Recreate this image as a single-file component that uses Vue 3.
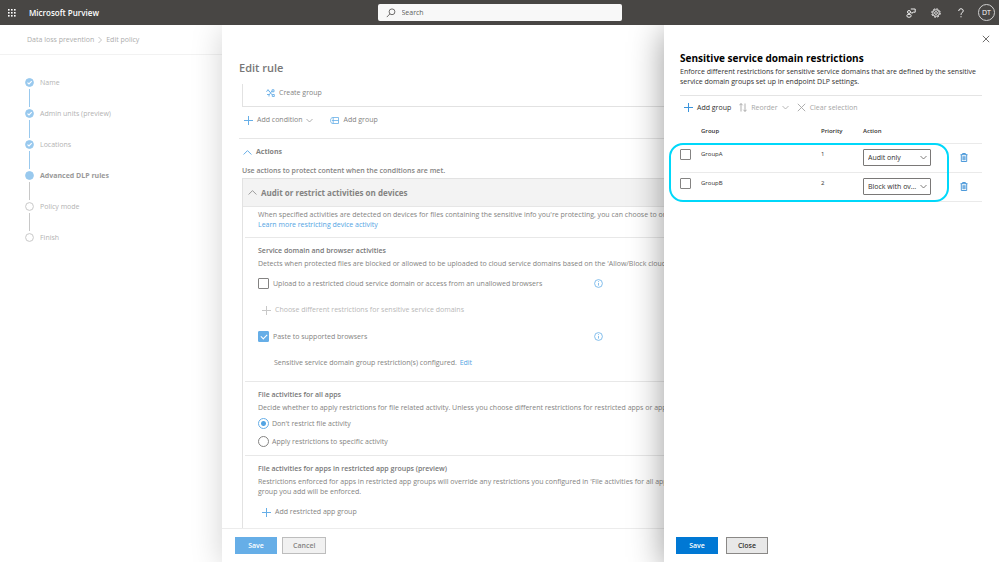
<script setup>
import { ref } from 'vue'

const steps = [
  { label: 'Name', state: 'done' },
  { label: 'Admin units (preview)', state: 'done' },
  { label: 'Locations', state: 'done' },
  { label: 'Advanced DLP rules', state: 'current' },
  { label: 'Policy mode', state: 'todo' },
  { label: 'Finish', state: 'todo' }
]

const actions = ['Audit only', 'Block with override', 'Block']

const groups = ref([
  { name: 'GroupA', priority: 1, action: 'Audit only', selected: false },
  { name: 'GroupB', priority: 2, action: 'Block with override', selected: false }
])

const search = ref('')
const upload = ref(false)
const paste = ref(true)
const fileActivity = ref('none')
</script>

<template>
  <div class="page">
    <header class="topbar">
      <div class="brand">
        <button class="icon-btn" aria-label="App launcher">
          <svg width="10" height="10" viewBox="0 0 10 10" fill="#fff">
            <template v-for="y in 3" :key="y">
              <rect v-for="x in 3" :key="x" :x="x * 3 - 2" :y="y * 3 - 2" width="1.6" height="1.6" />
            </template>
          </svg>
        </button>
        <span class="product">Microsoft Purview</span>
      </div>
      <label class="search">
        <svg width="10" height="10" viewBox="0 0 10 10" fill="none" stroke="#605e5c" stroke-width="0.9">
          <circle cx="6" cy="3.8" r="2.9" />
          <path d="M3.9 5.9L.8 9.1" />
        </svg>
        <input v-model="search" type="text" placeholder="Search" aria-label="Search" />
      </label>
      <div class="tools">
        <button class="icon-btn" aria-label="Feedback">
          <svg width="10" height="10" viewBox="0 0 10 10" fill="none" stroke="#fff" stroke-width="0.9">
            <circle cx="3" cy="4" r="1.5" />
            <ellipse cx="3" cy="7.8" rx="2.2" ry="1.5" />
            <path d="M4.8 1h4.4v3.2H7.2L5.8 5.4V4.2" />
          </svg>
        </button>
        <button class="icon-btn" aria-label="Settings">
          <svg width="10" height="10" viewBox="0 0 10 10" fill="none" stroke="#fff">
            <circle cx="5" cy="5" r="4.2" stroke-width="1" stroke-dasharray="1.9 1.4" />
            <circle cx="5" cy="5" r="3.3" stroke-width="0.8" />
            <circle cx="5" cy="5" r="1.4" stroke-width="0.8" />
          </svg>
        </button>
        <button class="icon-btn" aria-label="Help">
          <svg width="10" height="10" viewBox="0 0 10 10" fill="none" stroke="#fff" stroke-width="1">
            <path d="M2.8 3C2.8 1.5 3.7.8 5 .8s2.2.8 2.2 2c0 1.7-2.2 1.9-2.2 4" />
            <path d="M5 8.2v1.1" />
          </svg>
        </button>
        <button class="avatar">DT</button>
      </div>
    </header>

    <main class="policy">
      <nav class="crumbs" aria-label="Breadcrumb">
        <a href="#">Data loss prevention</a>
        <svg width="4" height="8" viewBox="0 0 4 8" fill="none" stroke="#b5b5b5" stroke-width="0.8">
          <path d="M.5 1l3 3-3 3" />
        </svg>
        <a href="#">Edit policy</a>
      </nav>
      <ol class="steps">
        <li v-for="step in steps" :key="step.label" :class="step.state">
          <span class="rail">
            <svg width="9" height="9" viewBox="0 0 9 9" fill="none">
              <circle class="dot" cx="4.5" cy="4.5" r="3.9" />
              <path v-if="step.state === 'done'" d="M2.5 4.6L4 6l2.7-2.8" stroke="#fff" stroke-width="1.1" />
            </svg>
            <span class="line"></span>
          </span>
          <span class="label">{{ step.label }}</span>
        </li>
      </ol>
    </main>

    <section class="rule" aria-label="Edit rule">
      <h1>Edit rule</h1>
      <div class="rule-body">
        <div class="conditions">
          <button class="cmd">
            <svg width="9" height="8" viewBox="0 0 9 8" fill="none" stroke="#66aee7" stroke-width="0.9">
              <path d="M.5 2.8L2 .6l1.500 2.200M3 1.800l3 4M6 2L3 6M6 .8h2v2H6zM1 5.500h2v2M6.300 5.500h2v2h-2z" />
            </svg>
            Create group
          </button>
        </div>
        <div class="cmd-row">
          <button class="cmd">
            <svg width="9" height="9" viewBox="0 0 9 9" stroke="#66aee7"><path d="M4.5 0v9M0 4.5h9" /></svg>
            Add condition
            <svg width="7" height="5" viewBox="0 0 7 5" fill="none" stroke="#999" stroke-width="0.8"><path d="M.5 1l3 3 3-3" /></svg>
          </button>
          <button class="cmd">
            <svg width="9" height="7" viewBox="0 0 9 7" fill="none" stroke="#66aee7" stroke-width="0.8">
              <path d="M3 .5h5.500v6H3C1.200 6.500.5 5 .5 3.500S1.200.5 3 .5zM3.200.5v6M1.800 3.500h6.700" />
            </svg>
            Add group
          </button>
        </div>

        <h2>
          <svg width="9" height="5" viewBox="0 0 9 5" fill="none" stroke="#66aee7"><path d="M.6 4.500l3.900-3.900 3.900 3.900" /></svg>
          Actions
        </h2>
        <p class="hint">Use actions to protect content when the conditions are met.</p>

        <div class="card">
          <h3 class="card-head">
            <svg width="9" height="5" viewBox="0 0 9 5" fill="none" stroke="#848484" stroke-width="0.8"><path d="M.6 4.500l3.900-3.900 3.900 3.900" /></svg>
            Audit or restrict activities on devices
          </h3>
          <div class="block intro">
            <p>When specified activities are detected on devices for files containing the sensitive info you're protecting, you can choose to only</p>
            <a href="#">Learn more restricting device activity</a>
          </div>
          <div class="block">
            <h4>Service domain and browser activities</h4>
            <p>Detects when protected files are blocked or allowed to be uploaded to cloud service domains based on the 'Allow/Block cloud</p>
            <div class="option">
              <label><input v-model="upload" type="checkbox" /> Upload to a restricted cloud service domain or access from an unallowed browsers</label>
              <svg class="info" width="9" height="9" viewBox="0 0 9 9" fill="none" stroke="#66aee7" stroke-width="0.8">
                <circle cx="4.5" cy="4.5" r="3.9" /><path d="M4.5 4v2.600M4.5 2.200v.9" />
              </svg>
            </div>
            <button class="cmd nested" disabled>
              <svg width="9" height="9" viewBox="0 0 9 9" stroke="#c8c8c8"><path d="M4.5 0v9M0 4.5h9" /></svg>
              Choose different restrictions for sensitive service domains
            </button>
            <div class="option">
              <label><input v-model="paste" type="checkbox" /> Paste to supported browsers</label>
              <svg class="info" width="9" height="9" viewBox="0 0 9 9" fill="none" stroke="#66aee7" stroke-width="0.8">
                <circle cx="4.5" cy="4.5" r="3.9" /><path d="M4.5 4v2.600M4.5 2.200v.9" />
              </svg>
            </div>
            <p class="configured">Sensitive service domain group restriction(s) configured. <a href="#">Edit</a></p>
          </div>
          <div class="block">
            <h4>File activities for all apps</h4>
            <p>Decide whether to apply restrictions for file related activity. Unless you choose different restrictions for restricted apps or app groups</p>
            <div class="radios">
              <label><input v-model="fileActivity" type="radio" name="activity" value="none" /> Don't restrict file activity</label>
              <label><input v-model="fileActivity" type="radio" name="activity" value="specific" /> Apply restrictions to specific activity</label>
            </div>
          </div>
          <div class="block">
            <h4>File activities for apps in restricted app groups (preview)</h4>
            <p>Restrictions enforced for apps in restricted app groups will override any restrictions you configured in 'File activities for all apps'<br />group you add will be enforced.</p>
            <button class="cmd nested add-app">
              <svg width="9" height="9" viewBox="0 0 9 9" stroke="#66aee7"><path d="M4.5 0v9M0 4.5h9" /></svg>
              Add restricted app group
            </button>
          </div>
        </div>
      </div>
      <footer class="rule-foot">
        <button class="btn primary">Save</button>
        <button class="btn">Cancel</button>
      </footer>
    </section>

    <aside class="domains" aria-label="Sensitive service domain restrictions">
      <button class="icon-btn close" aria-label="Close panel">
        <svg width="8" height="8" viewBox="0 0 8 8" stroke="#605e5c" stroke-width="0.9"><path d="M.8.8l6.400 6.400M7.200.8L.8 7.200" /></svg>
      </button>
      <h1>Sensitive service domain restrictions</h1>
      <p class="lead">Enforce different restrictions for sensitive service domains that are defined by the sensitive service domain groups set up in endpoint DLP settings.</p>
      <div class="toolbar">
        <button class="cmd">
          <svg width="9" height="9" viewBox="0 0 9 9" stroke="#3a94dc"><path d="M4.5 0v9M0 4.5h9" /></svg>
          Add group
        </button>
        <button class="cmd" disabled>
          <svg width="8" height="9" viewBox="0 0 8 9" fill="none" stroke="#a6a6a6" stroke-width="0.9"><path d="M2 8.500v-8M.3 2.300L2 .6l1.700 1.700M6 .5v8M4.300 6.700L6 8.400l1.700-1.700" /></svg>
          Reorder
          <svg width="7" height="5" viewBox="0 0 7 5" fill="none" stroke="#a6a6a6" stroke-width="0.8"><path d="M.5 1l3 3 3-3" /></svg>
        </button>
        <button class="cmd" disabled>
          <svg width="9" height="9" viewBox="0 0 9 9" stroke="#a6a6a6" stroke-width="0.9"><path d="M.8.8l7.400 7.400M8.200.8L.8 8.200" /></svg>
          Clear selection
        </button>
      </div>
      <div class="table-wrap">
        <table>
          <colgroup>
            <col class="c-check" /><col /><col class="c-priority" /><col class="c-action" /><col class="c-delete" />
          </colgroup>
          <thead>
            <tr>
              <th></th>
              <th>Group</th>
              <th>Priority</th>
              <th>Action</th>
              <th></th>
            </tr>
          </thead>
          <tbody>
            <tr v-for="group in groups" :key="group.name">
              <td><input v-model="group.selected" type="checkbox" :aria-label="'Select ' + group.name" /></td>
              <td>{{ group.name }}</td>
              <td>{{ group.priority }}</td>
              <td class="mid">
                <span class="dropdown">
                  <select v-model="group.action" :aria-label="'Action for ' + group.name">
                    <option v-for="action in actions" :key="action">{{ action }}</option>
                  </select>
                  <svg width="7" height="5" viewBox="0 0 7 5" fill="none" stroke="#605e5c" stroke-width="0.8"><path d="M.5 1l3 3 3-3" /></svg>
                </span>
              </td>
              <td class="mid">
                <button class="icon-btn" :aria-label="'Delete ' + group.name">
                  <svg width="8" height="9" viewBox="0 0 8 9" fill="none" stroke="#3a8fd6" stroke-width="0.9">
                    <path d="M.5 1.700h7M2.600 1.600V.5h2.800v1.100M1.300 1.800v6.700h5.400V1.800M3 3.200v4M4 3.200v4M5 3.200v4" />
                  </svg>
                </button>
              </td>
            </tr>
          </tbody>
        </table>
        <div class="highlight"></div>
      </div>
      <footer class="domains-foot">
        <button class="btn primary">Save</button>
        <button class="btn">Close</button>
      </footer>
    </aside>
  </div>
</template>

<style>
body {
  margin: 0;
}
</style>

<style scoped>
.page {
  position: relative;
  display: flex;
  flex-direction: column;
  height: 100vh;
  overflow: hidden;
  background: #fff;
  color: #323130;
  font-family: "Open Sans", "Noto Sans", sans-serif;
  font-size: 7px;
  line-height: 10px;
}

.page * {
  box-sizing: border-box;
}

h1, h2, h3, h4, p, ol {
  margin: 0;
  padding: 0;
}

svg {
  flex: none;
  display: block;
}

button, input, select {
  font: inherit;
  color: inherit;
  margin: 0;
}

button {
  padding: 0;
  border: 0;
  background: none;
}

a {
  color: #53a4e3;
  text-decoration: none;
}

.icon-btn {
  display: flex;
}

/* top bar */
.topbar {
  position: relative;
  z-index: 3;
  flex: none;
  display: grid;
  grid-template-columns: 1fr 244px 1fr;
  align-items: center;
  height: 25px;
  padding: 0 4px;
  background: #484644;
  color: #fff;
}

.brand {
  display: flex;
  align-items: center;
  gap: 12px;
  padding-left: 3px;
}

.product {
  font-size: 8px;
  font-weight: 600;
}

.search {
  display: flex;
  align-items: center;
  gap: 6px;
  height: 17px;
  padding: 0 8px;
  border-radius: 2px;
  background: #f8f8f8;
}

.search input {
  flex: 1;
  min-width: 0;
  padding: 0;
  border: 0;
  outline: 0;
  background: none;
  color: #605e5c;
}

.search input::placeholder {
  color: #605e5c;
}

.tools {
  display: flex;
  align-items: center;
  justify-content: flex-end;
  gap: 15px;
}

.avatar {
  width: 17px;
  height: 17px;
  margin-left: -3px;
  border: 1px solid #d0d0d0;
  border-radius: 50%;
}

/* policy page */
.crumbs {
  display: flex;
  align-items: center;
  gap: 4px;
  height: 30px;
  padding-left: 27px;
  border-bottom: 1px solid #f2f2f2;
}

.crumbs a {
  color: #adadad;
}

.steps {
  padding: 23px 0 0 25px;
  list-style: none;
}

.steps li {
  display: flex;
  gap: 6px;
  height: 31px;
  color: #b3b3b3;
}

.rail {
  display: flex;
  flex-direction: column;
  align-items: center;
  gap: 2px;
}

.dot {
  stroke: #c8c8c8;
}

.done .dot,
.current .dot {
  fill: #99c9ee;
  stroke: #99c9ee;
}

.line {
  width: 1px;
  height: 18px;
  background: #c8c8c8;
}

.done .line {
  background: #99c9ee;
}

.steps li:last-child .line {
  display: none;
}

.current .label {
  color: #999;
  font-weight: 700;
}

/* rule panel */
.rule {
  position: absolute;
  z-index: 1;
  top: 25px;
  right: 0;
  bottom: 0;
  left: 222px;
  display: flex;
  flex-direction: column;
  background: #fff;
  box-shadow: 0 4px 30px rgba(0, 0, 0, 0.18);
  color: #848382;
  white-space: nowrap;
}

.rule h1 {
  padding: 35px 0 9px 17px;
  font-size: 11px;
  line-height: 15px;
  font-weight: 600;
  color: #777;
}

.rule-body {
  flex: 1;
  min-height: 0;
  padding-left: 17px;
  overflow: hidden;
}

.conditions {
  height: 23px;
  margin-left: 3px;
  padding: 4px 0 0 23px;
  border: solid #e2e2e2;
  border-width: 0 0 1px 1px;
}

.cmd {
  display: flex;
  align-items: center;
  gap: 4px;
}

.cmd-row {
  display: flex;
  align-items: center;
  gap: 17px;
  height: 32px;
  padding: 0 0 5px 5px;
  border-bottom: 1px solid #e6e6e6;
}

.rule h2 {
  display: flex;
  align-items: center;
  gap: 4px;
  padding: 8px 0 0 4px;
  font-size: 7px;
  font-weight: 700;
}

.hint {
  padding: 9px 0 2px 3px;
  font-weight: 600;
}

.card {
  margin-left: 3px;
  border: solid #e2e2e2;
  border-width: 1px 0 0 1px;
}

.card-head {
  display: flex;
  align-items: center;
  gap: 4px;
  height: 28px;
  padding-left: 5px;
  border-bottom: 1px solid #e6e6e6;
  background: #f3f3f3;
  font-size: 8px;
  font-weight: 700;
}

.block {
  margin-left: 2px;
  padding: 8px 0 8px 13px;
  border-bottom: 1px solid #e8e8e8;
}

.block:last-child {
  padding-bottom: 16px;
  border-bottom: 0;
}

.block.intro {
  padding: 3px 0 7px 13px;
}

.block h4 {
  margin-bottom: 3px;
  font-size: 7px;
  font-weight: 600;
  color: #777;
}

.option {
  display: flex;
  align-items: center;
  height: 11px;
  margin-top: 9px;
}

.option label {
  display: flex;
  align-items: center;
  gap: 4px;
  width: 336px;
}

input[type="checkbox"],
input[type="radio"] {
  appearance: none;
  flex: none;
  display: block;
  width: 11px;
  height: 11px;
  border: 1px solid #848382;
  border-radius: 1px;
  background: #fff;
}

input[type="checkbox"]:checked {
  position: relative;
  border-color: #66aee7;
  background: #66aee7;
}

input[type="checkbox"]:checked::after {
  content: "";
  position: absolute;
  top: 2px;
  left: 2px;
  width: 5px;
  height: 3px;
  border: solid #fff;
  border-width: 0 0 1px 1px;
  transform: rotate(-45deg);
}

input[type="radio"] {
  border-radius: 50%;
}

input[type="radio"]:checked {
  border-color: #66aee7;
  background: radial-gradient(#53a4e3 2px, #fff 3px);
}

.cmd.nested {
  gap: 4px;
  margin: 16px 0 0 4px;
}

.cmd.nested.add-app {
  margin-top: 10px;
}

.cmd:disabled {
  color: #b8b8b8;
}

.toolbar .cmd:disabled {
  color: #a6a6a6;
}

.cmd.nested + .option {
  margin-top: 16px;
}

.configured {
  padding: 16px 0 5px 16px;
}

.configured a {
  margin-left: 1px;
}

.radios {
  display: flex;
  flex-direction: column;
  gap: 7px;
  padding-top: 5px;
}

.radios label {
  display: flex;
  align-items: center;
  gap: 3px;
}

.rule-foot {
  display: flex;
  flex: none;
  gap: 5px;
  height: 34px;
  padding: 8px 0 0 13px;
  border-top: 1px solid #ececec;
}

.btn {
  min-width: 42px;
  height: 17px;
  padding: 0 10px;
  border: 1px solid #8a8886;
  background: #e8e8e8;
  font-weight: 600;
}

.btn.primary {
  border-color: #0078d4;
  background: #0078d4;
  color: #fff;
}

.rule .btn {
  min-width: 44px;
  border-color: #bdbdbd;
  background: #f1f1f1;
}

.rule .btn.primary {
  min-width: 42px;
  border-color: #66aee7;
  background: #66aee7;
}

/* domain restrictions panel */
.domains {
  position: absolute;
  z-index: 2;
  top: 25px;
  right: 0;
  bottom: 0;
  display: flex;
  flex-direction: column;
  width: 335px;
  padding: 10px 17px 8px 16px;
  background: #fff;
  box-shadow: 0 6px 32px rgba(0, 0, 0, 0.4);
}

.close {
  align-self: flex-end;
  margin-right: -8px;
}

.domains h1 {
  padding: 8px 0 1px;
  font-size: 10px;
  line-height: 15px;
  font-weight: 700;
  color: #000;
}

.lead {
  padding-bottom: 8px;
  border-bottom: 1px solid #e4e4e4;
}

.toolbar {
  display: flex;
  align-items: center;
  gap: 8px;
  height: 23px;
  padding-left: 4px;
}

.table-wrap {
  position: relative;
}

table {
  width: 100%;
  border-collapse: collapse;
  table-layout: fixed;
}

.c-check {
  width: 21px;
}

.c-priority {
  width: 42px;
}

.c-action {
  width: 97px;
}

.c-delete {
  width: 22px;
}

th,
td {
  padding: 0;
  border-bottom: 1px solid #eaeaea;
  text-align: left;
}

th {
  height: 24px;
  font-size: 6px;
  font-weight: 600;
}

td {
  height: 29px;
  padding-top: 5px;
  vertical-align: top;
  font-size: 6px;
}

td.mid {
  padding: 0;
  vertical-align: middle;
}

.dropdown {
  display: flex;
  align-items: center;
  position: relative;
  width: 68px;
  font-size: 7px;
}

.dropdown select {
  appearance: none;
  width: 100%;
  height: 17px;
  padding: 0 11px 0 4px;
  border: 1px solid #7a7877;
  border-radius: 1px;
  background: #fff;
  overflow: hidden;
  text-overflow: ellipsis;
  white-space: nowrap;
}

.dropdown svg {
  position: absolute;
  right: 4px;
  pointer-events: none;
}

.highlight {
  position: absolute;
  top: 24px;
  right: 33px;
  bottom: 0;
  left: -11px;
  border: 2px solid #00d8fa;
  border-radius: 14px;
  pointer-events: none;
}

.domains-foot {
  display: flex;
  gap: 8px;
  margin: auto 0 0 -4px;
}
</style>
